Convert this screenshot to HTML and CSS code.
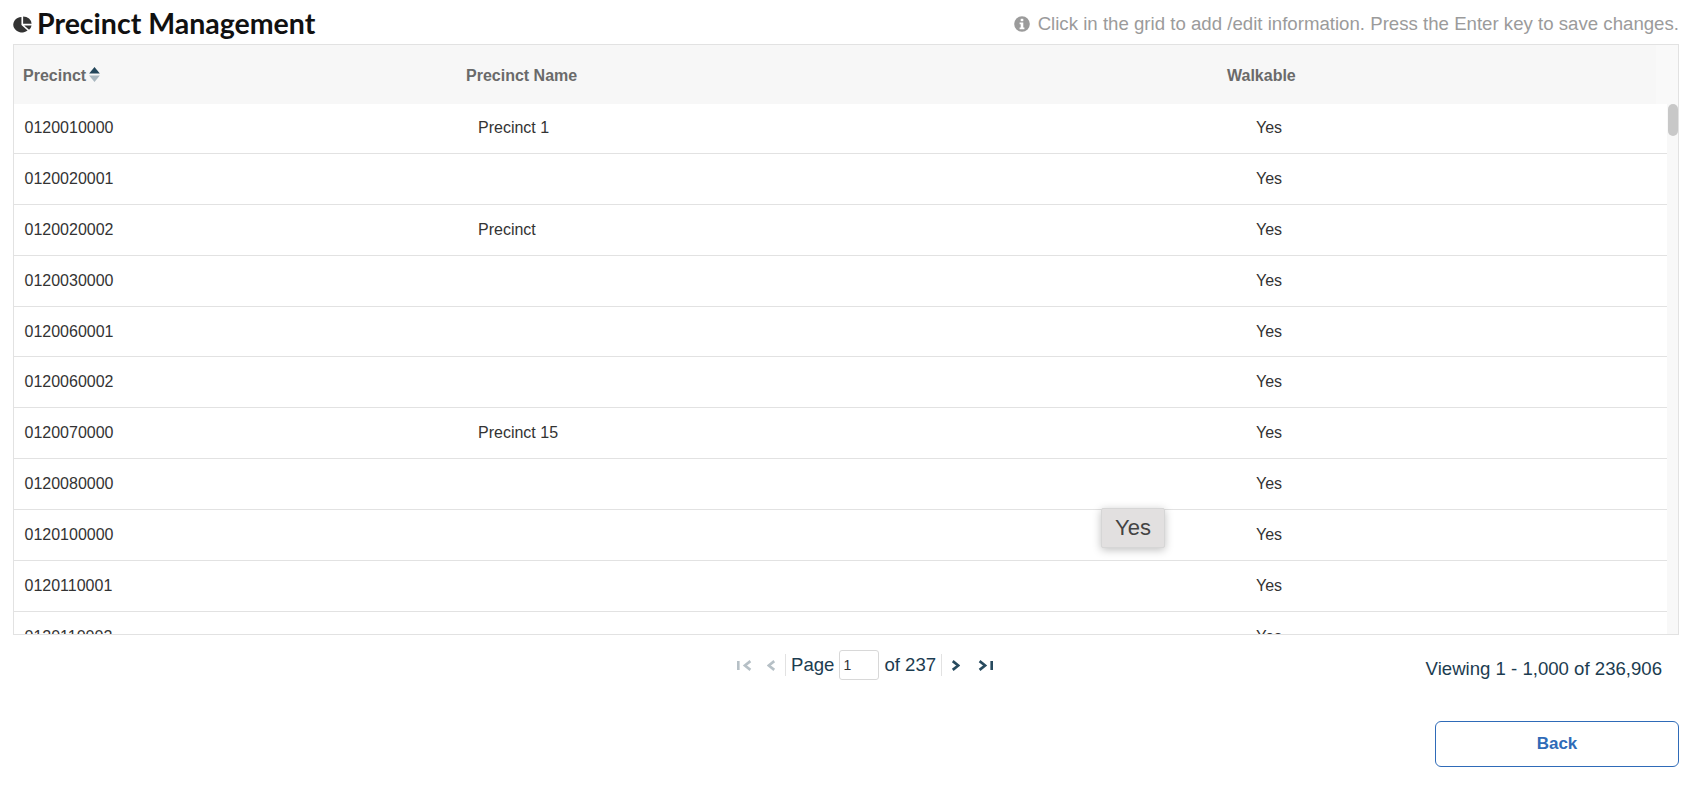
FILE: index.html
```html
<!DOCTYPE html>
<html lang="en">
<head>
    <meta charset="UTF-8">
    <title>Precinct Management</title>
    <link rel="stylesheet" href="styles.css">
</head>
<body>
    <div class="page">
        <div class="title-row">
            <h1 class="page-title">
                <svg class="pie-icon" viewBox="0 0 18 18" preserveAspectRatio="none"><path d="M8 1A8.2 8.2 0 1 0 13.8 15.4L8 9.4Z" fill="#333"/><path d="M9.6 .4A8 8 0 0 1 17.6 8.2H9.6Z" fill="#333"/><path d="M10.6 10H17.6A8 8 0 0 1 15.2 14.6Z" fill="#333"/></svg>
                Precinct Management
            </h1>
            <div class="hint">
                <svg class="info-icon" viewBox="0 0 16 16"><circle cx="8" cy="8" r="7.8" fill="#9b9b9b"/><rect x="6.7" y="2.8" width="2.6" height="2.4" fill="#fff"/><path d="M5.6 6.4H9.3V11.4H10.4V13.2H5.6V11.4H6.7V8.2H5.6Z" fill="#fff"/></svg>
                Click in the grid to add /edit information. Press the Enter key to save changes.
            </div>
        </div>

        <div class="grid">
            <div class="grid-head">
                <div class="head-cell">Precinct
                    <svg class="sort-icon" viewBox="0 0 10 14"><path d="M5 0 10 6H0Z" fill="#23465a"/><path d="M0 8H10L5 14Z" fill="#a9b7bf"/></svg>
                </div>
                <div class="head-cell">Precinct Name</div>
                <div class="head-cell walk-head">Walkable</div>
            </div>
            <div class="grid-body">
                <div class="rows">
                    <div class="row"><span>0120010000</span><span class="name">Precinct 1</span><span class="walk">Yes</span></div>
                    <div class="row"><span>0120020001</span><span class="name"></span><span class="walk">Yes</span></div>
                    <div class="row"><span>0120020002</span><span class="name">Precinct</span><span class="walk">Yes</span></div>
                    <div class="row"><span>0120030000</span><span class="name"></span><span class="walk">Yes</span></div>
                    <div class="row"><span>0120060001</span><span class="name"></span><span class="walk">Yes</span></div>
                    <div class="row"><span>0120060002</span><span class="name"></span><span class="walk">Yes</span></div>
                    <div class="row"><span>0120070000</span><span class="name">Precinct 15</span><span class="walk">Yes</span></div>
                    <div class="row"><span>0120080000</span><span class="name"></span><span class="walk">Yes</span></div>
                    <div class="row"><span>0120100000</span><span class="name"></span><span class="walk">Yes</span></div>
                    <div class="row"><span>0120110001</span><span class="name"></span><span class="walk">Yes</span></div>
                    <div class="row"><span>0120110002</span><span class="name"></span><span class="walk">Yes</span></div>
                </div>
                <div class="scroll-track"><div class="scroll-thumb"></div></div>
            </div>
            <div class="cell-tooltip">Yes</div>
        </div>

        <div class="footer">
            <div class="pager">
                <svg class="pg-icon off" viewBox="0 0 16 10"><path d="M1 1V9M12 1 7 5 12 9" /></svg>
                <svg class="pg-icon off small" viewBox="0 0 8 10"><path d="M6.5 1 1.5 5 6.5 9" /></svg>
                <span class="sep"></span>
                <span>Page</span>
                <input class="page-input" type="text" value="1">
                <span>of 237</span>
                <span class="sep"></span>
                <svg class="pg-icon small" viewBox="0 0 8 10"><path d="M1.5 1 6.5 5 1.5 9" /></svg>
                <svg class="pg-icon last" viewBox="0 0 16 10"><path d="M4 1 9 5 4 9M15 1V9" /></svg>
            </div>
            <div class="viewing">Viewing 1 - 1,000 of 236,906</div>
        </div>

        <div class="actions">
            <button class="back-button">Back</button>
        </div>
    </div>
</body>
</html>
```

FILE: styles.css
```css
* {
    margin: 0;
    padding: 0;
    box-sizing: border-box;
    font-family: "Liberation Sans", Arial, sans-serif;
}

body {
    background: #fff;
    overflow: hidden;
}

.page {
    padding: 0 19px 0 13px;
    height: 790px;
}

.title-row {
    display: flex;
    justify-content: space-between;
    align-items: center;
    height: 44px;
    padding-top: 4px;
}

.page-title {
    display: flex;
    align-items: center;
    gap: 5px;
    margin-top: -2px;
    font-family: Lato, sans-serif;
    font-size: 28.5px;
    font-weight: 700;
    color: #111;
}

.pie-icon {
    width: 19px;
    height: 17px;
    margin-top: 3px;
}

.hint {
    display: flex;
    align-items: center;
    gap: 8px;
    font-size: 18.65px;
    color: #9b9b9b;
}

.info-icon {
    width: 16px;
    height: 16px;
}

.grid {
    position: relative;
    border: 1px solid #e2e2e2;
    height: 591px;
}

.grid-head {
    display: grid;
    grid-template-columns: 443px 770px 1fr;
    align-items: center;
    height: 59px;
    padding-top: 2px;
    background: linear-gradient(to right, #f7f7f7 98.7%, #f9f9f9 98.7%);
    font-size: 16px;
    font-weight: 700;
    color: #6a6a6a;
}

.head-cell {
    display: flex;
    align-items: center;
    gap: 3px;
    padding-left: 9px;
}

.sort-icon {
    width: 11px;
    height: 15px;
    margin-top: -2px;
}

.walk-head {
    padding-left: 0;
}

.grid-body {
    display: flex;
    height: 530px;
    overflow: hidden;
}

.rows {
    flex: 1;
    margin-top: -1px;
}

.row {
    display: grid;
    grid-template-columns: 443px 770px 1fr;
    align-items: center;
    height: 50.9px;
    border-bottom: 1px solid #e2e2e2;
    font-size: 16px;
    color: #333;
}

.row span {
    padding-left: 10.5px;
}

.row .name {
    padding-left: 21px;
}

.row .walk {
    padding-left: 29px;
}

.scroll-track {
    width: 11px;
    padding-left: 1px;
    background: #f8f8f8;
}

.scroll-thumb {
    height: 32px;
    background: #c8c8c8;
    border-radius: 5px;
}

.cell-tooltip {
    position: absolute;
    left: 1087px;
    top: 463px;
    width: 64px;
    height: 40px;
    display: flex;
    align-items: center;
    justify-content: center;
    background: #e2e0e0;
    border: 1px solid #d6d6d6;
    border-radius: 2px;
    box-shadow: 0 2px 8px rgba(0, 0, 0, 0.25);
    font-size: 22px;
    color: #444;
}

.footer {
    display: flex;
    align-items: flex-start;
    justify-content: space-between;
    height: 86px;
    padding-left: 721px;
    color: #1c3c50;
    font-size: 18.6px;
}

.pager {
    display: flex;
    align-items: center;
    gap: 5px;
    height: 32px;
    margin-top: 14px;
}

.pg-icon {
    width: 18px;
    height: 11px;
    fill: none;
    stroke: #274a5e;
    stroke-width: 2.4;
    margin: 0 3px;
}

.pg-icon.small {
    width: 9px;
    margin: 0 4px;
}

.pg-icon.last {
    margin-left: 6px;
}

.pg-icon.off {
    stroke: #b6c0c6;
}

.sep {
    width: 1px;
    height: 22px;
    background: #e2e2e2;
}

.page-input {
    width: 40px;
    height: 30px;
    border: 1px solid #d8d8d8;
    border-radius: 3px;
    padding-left: 3px;
    font-size: 14px;
    color: #333;
}

.viewing {
    margin-top: 23px;
    padding-right: 17px;
}

.actions {
    display: flex;
    justify-content: flex-end;
}

.back-button {
    width: 244px;
    height: 46px;
    border: 1px solid #2f6bb8;
    border-radius: 6px;
    background: #fff;
    color: #2f6bb8;
    font-size: 17px;
    font-weight: 700;
}
```
